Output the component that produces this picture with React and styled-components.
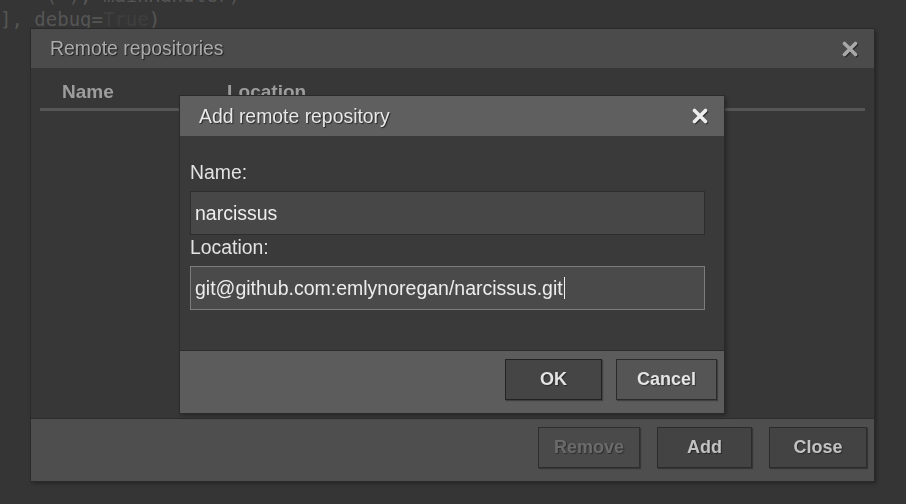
import styled, { createGlobalStyle } from 'styled-components'

const GlobalStyle = createGlobalStyle`
  html, body {
    margin: 0;
    padding: 0;
    background: #353535;
    overflow: hidden;
  }
  body {
    font-family: "Liberation Sans", Arial, sans-serif;
  }
`

const Editor = styled.div`
  width: 906px;
  height: 504px;
  background: #353535;
  overflow: hidden;
`

const Code = styled.pre`
  margin: -17px 0 0 0;
  font-family: "DejaVu Sans Mono", monospace;
  font-size: 19px;
  line-height: 24px;
  color: #555;
`

const Dim = styled.span`
  color: #3f3f3f;
`

const Window = styled.div`
  position: fixed;
  left: ${p => p.$left}px;
  top: ${p => p.$top}px;
  width: ${p => p.$width}px;
  height: ${p => p.$height}px;
  display: flex;
  flex-direction: column;
  background: ${p => p.$bg};
  box-shadow: 0 0 0 1px #2a2a2a, 2px 2px 4px rgba(0, 0, 0, 0.4);
`

const TitleBar = styled.div`
  height: ${p => p.$h}px;
  flex: none;
  display: flex;
  align-items: center;
  justify-content: space-between;
  padding: 0 16px 0 19px;
  background: ${p => p.$bg};
  color: ${p => p.$fg};
  font-size: 19.4px;
  text-shadow: 1px 1px 1px rgba(0, 0, 0, 0.6);
`

const CloseIcon = ({ color }) => (
  <svg width="16" height="16" viewBox="0 0 16 16" style={{ filter: 'drop-shadow(1px 1px 0 rgba(0,0,0,0.5))' }}>
    <path d="M2.5 2.5 L13.5 13.5 M13.5 2.5 L2.5 13.5" stroke={color} strokeWidth="3.6" strokeLinecap="round" />
  </svg>
)

const Body = styled.div`
  flex: 1;
  display: flex;
  flex-direction: column;
  padding: ${p => p.$pad};
`

const HeaderRow = styled.div`
  display: flex;
  padding: 13px 0 5px 22px;
  border-bottom: 3px solid #555;
  font-size: 19px;
  font-weight: bold;
  line-height: 22px;
  color: #9d9d9d;
`

const HeaderCell = styled.div`
  width: ${p => p.$w}px;
`

const Footer = styled.div`
  height: 63px;
  flex: none;
  display: flex;
  justify-content: flex-end;
  align-items: flex-start;
  gap: ${p => p.$gap}px;
  padding: 8px ${p => p.$right}px 0 0;
  box-sizing: border-box;
  background: ${p => p.$bg};
  border-top: 1px solid #2c2c2c;
`

const Button = styled.button`
  width: ${p => p.$w}px;
  height: 41px;
  background: ${p => p.$bg};
  border: 1px solid ${p => p.$border};
  color: ${p => p.$fg};
  font-family: "Liberation Sans", Arial, sans-serif;
  font-size: 18px;
  font-weight: bold;
  text-shadow: 1px 1px 1px rgba(0, 0, 0, 0.4);
  box-shadow: 1px 1px 1px rgba(0, 0, 0, 0.3);
  padding: 0;
`

const Label = styled.div`
  font-size: 19.4px;
  line-height: 22px;
  color: #e2e2e2;
  margin-top: ${p => p.$mt}px;
`

const Field = styled.div`
  height: 44px;
  box-sizing: border-box;
  margin-top: 8px;
  display: flex;
  align-items: center;
  padding-left: 4px;
  background: ${p => (p.$focus ? '#4a4a4a' : '#474747')};
  border: 1px solid ${p => (p.$focus ? '#7c7c7c' : '#2d2d2d')};
  font-size: 19.5px;
  color: #ececec;
`

const Caret = styled.span`
  display: inline-block;
  width: 1px;
  height: 22px;
  background: #eee;
  margin-left: 1px;
`

export default function App() {
  return (
    <Editor>
      <GlobalStyle />
      <Code>
        {'    ( ), mainHandler)\n'}
        {'], debug='}<Dim>True</Dim>{')'}
      </Code>

      <Window $left={31} $top={29} $width={843} $height={452} $bg="#373737">
        <TitleBar $h={39} $bg="#4b4b4b" $fg="#ababab">
          Remote repositories
          <CloseIcon color="#a8a8a8" />
        </TitleBar>
        <Body $pad="0 9px">
          <HeaderRow>
            <HeaderCell $w={165}>Name</HeaderCell>
            <HeaderCell $w={200}>Location</HeaderCell>
          </HeaderRow>
        </Body>
        <Footer $bg="#4e4e4e" $gap={17} $right={7}>
          <Button $w={102} $bg="#4a4a4a" $border="#2e2e2e" $fg="#6b6b6b">Remove</Button>
          <Button $w={95} $bg="#434343" $border="#2b2b2b" $fg="#c2c2c2">Add</Button>
          <Button $w={98} $bg="#434343" $border="#2b2b2b" $fg="#c2c2c2">Close</Button>
        </Footer>
      </Window>

      <Window $left={180} $top={96} $width={544} $height={317} $bg="#3a3a3a">
        <TitleBar $h={40} $bg="#5f5f5f" $fg="#e8e8e8">
          Add remote repository
          <CloseIcon color="#ededed" />
        </TitleBar>
        <Body $pad="0 19px 0 10px">
          <Label $mt={25}>Name:</Label>
          <Field>narcissus</Field>
          <Label $mt={1}>Location:</Label>
          <Field $focus>
            git@github.com:emlynoregan/narcissus.git<Caret />
          </Field>
        </Body>
        <Footer $bg="#5c5c5c" $gap={14} $right={7}>
          <Button $w={97} $bg="#454545" $border="#222" $fg="#e4e4e4">OK</Button>
          <Button $w={101} $bg="#555" $border="#2a2a2a" $fg="#e4e4e4">Cancel</Button>
        </Footer>
      </Window>
    </Editor>
  )
}
